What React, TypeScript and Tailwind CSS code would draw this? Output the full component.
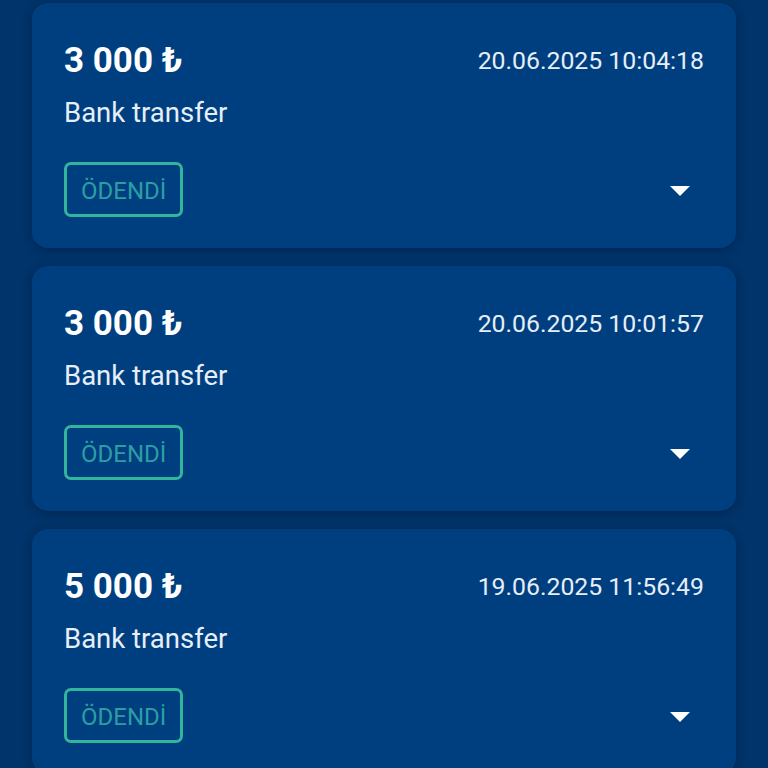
import React from "react";

type Payment = {
  amount: string;
  method: string;
  date: string;
  status: string;
};

const PAYMENTS: Payment[] = [
  { amount: "3 000 ₺", method: "Bank transfer", date: "20.06.2025 10:04:18", status: "ÖDENDİ" },
  { amount: "3 000 ₺", method: "Bank transfer", date: "20.06.2025 10:01:57", status: "ÖDENDİ" },
  { amount: "5 000 ₺", method: "Bank transfer", date: "19.06.2025 11:56:49", status: "ÖDENDİ" },
];

// material "arrow_drop_down"
const DropIcon = () => (
  <svg viewBox="0 0 24 24" className="w-12 h-12 fill-white">
    <path d="M7 10l5 5 5-5z" />
  </svg>
);

const PaymentCard = ({ p }: { p: Payment }) => (
  <div className="rounded-[16px] bg-[#003f7f] shadow-[0_2px_10px_rgba(0,20,50,0.45)] pl-8 pr-8 pt-[38px] pb-[31px]">
    <div className="flex items-center justify-between">
      <span className="text-[35px] leading-[40px] font-bold text-white">{p.amount}</span>
      <span className="text-[24.8px] leading-[40px] text-[#e6eef8]">{p.date}</span>
    </div>
    <p className="mt-[16px] text-[27.5px] leading-[32px] text-[#e6eef8]">{p.method}</p>
    <div className="mt-[33px] flex items-center justify-between">
      <span className="h-[55px] flex items-center pt-[3px] px-[14px] border-[3px] border-[#31b59d] rounded-[7px] text-[24px] text-[#2b9ea4]">
        {p.status}
      </span>
      <DropIcon />
    </div>
  </div>
);

export default function App() {
  return (
    <div
      className="min-h-screen bg-[#00346a] px-8 pt-[3px] pb-8 flex flex-col gap-[18px]"
      style={{ fontFamily: "Roboto, 'Noto Sans', sans-serif" }}
    >
      {PAYMENTS.map((p, i) => (
        <PaymentCard key={i} p={p} />
      ))}
    </div>
  );
}
